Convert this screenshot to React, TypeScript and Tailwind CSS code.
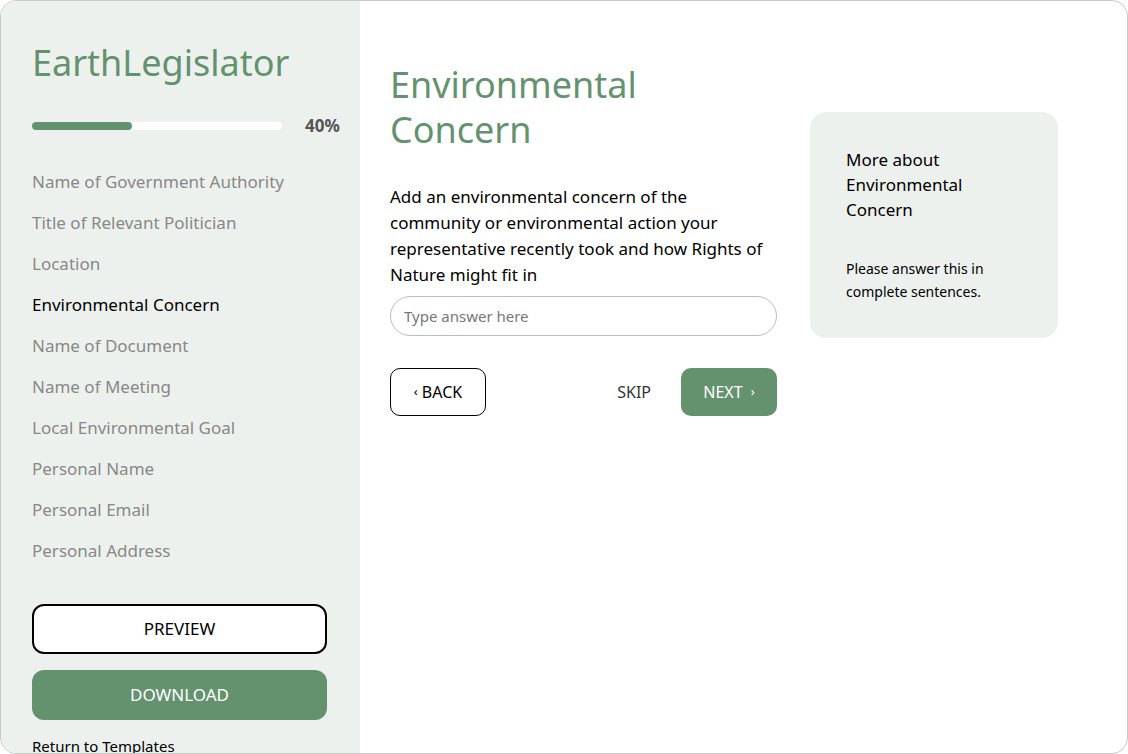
import React, { useState } from 'react';

const steps = [
  'Name of Government Authority',
  'Title of Relevant Politician',
  'Location',
  'Environmental Concern',
  'Name of Document',
  'Name of Meeting',
  'Local Environmental Goal',
  'Personal Name',
  'Personal Email',
  'Personal Address',
];

const App: React.FC = () => {
  const [answer, setAnswer] = useState('');
  const active = 'Environmental Concern';

  return (
    <div
      className="flex h-[754px] w-[1128px] overflow-hidden rounded-2xl border border-[#c9c9c9] bg-white"
      style={{ fontFamily: '"Noto Sans", "Open Sans", sans-serif' }}
    >
      {/* sidebar */}
      <aside className="flex w-[359px] shrink-0 flex-col bg-[#edf1ee] pl-[31px] pt-[40px]">
        <h1 className="shrink-0 text-[36px] leading-[44px] text-[#64926f]">EarthLegislator</h1>

        <div className="mt-[28px] flex shrink-0 items-center">
          <div className="h-[8px] w-[250px] rounded-full bg-white">
            <div className="h-full w-[40%] rounded-full bg-[#64926f]" />
          </div>
          <span className="ml-[23px] text-[17px] font-bold text-[#555]">40%</span>
        </div>

        <nav className="mt-[22px] flex shrink-0 flex-col">
          {steps.map((s) => (
            <div
              key={s}
              className={`text-[17px] leading-[41px] ${s === active ? 'text-black' : 'text-[#888]'}`}
            >
              {s}
            </div>
          ))}
        </nav>

        <button className="mt-[33px] h-[50px] w-[295px] shrink-0 rounded-xl border-2 border-black bg-white text-[17px] text-black">
          PREVIEW
        </button>
        <button className="mt-[16px] h-[50px] w-[295px] shrink-0 rounded-xl bg-[#64926f] text-[17px] text-white">
          DOWNLOAD
        </button>
        <a className="mt-[16px] shrink-0 text-[15px] leading-[20px] text-black">Return to Templates</a>
      </aside>

      {/* main */}
      <main className="flex items-start gap-[33px] pl-[30px]">
        <section className="w-[387px] pt-[61px]">
          <h2 className="text-[36px] leading-[45px] text-[#64926f]">Environmental Concern</h2>
          <p className="mt-[32px] text-[17px] leading-[26px] text-black">
            Add an environmental concern of the community or environmental action your representative recently took
            and how Rights of Nature might fit in
          </p>
          <input
            value={answer}
            onChange={(e) => setAnswer(e.target.value)}
            placeholder="Type answer here"
            className="mt-[8px] h-[40px] w-full rounded-full border border-[#bdbdbd] px-[13px] text-[15px] text-black placeholder-[#777] outline-none"
          />
          <div className="mt-[32px] flex items-center">
            <button className="flex h-[48px] w-[96px] items-center justify-center gap-[4px] rounded-[10px] border border-black text-[16px] text-black">
              <span className="text-[13px]">‹</span>BACK
            </button>
            <button className="ml-auto mr-[30px] text-[16px] text-[#333]">SKIP</button>
            <button className="flex h-[48px] w-[96px] items-center justify-center gap-[8px] rounded-[10px] bg-[#64926f] text-[16px] text-white">
              NEXT<span className="text-[13px]">›</span>
            </button>
          </div>
        </section>

        <aside className="mt-[111px] w-[248px] rounded-2xl bg-[#edf1ee] px-[36px] pb-[35px] pt-[35px]">
          <h3 className="text-[17px] leading-[25px] text-black">More about Environmental Concern</h3>
          <p className="mt-[35px] text-[14px] leading-[23px] text-black">Please answer this in complete sentences.</p>
        </aside>
      </main>
    </div>
  );
};

export default App;
